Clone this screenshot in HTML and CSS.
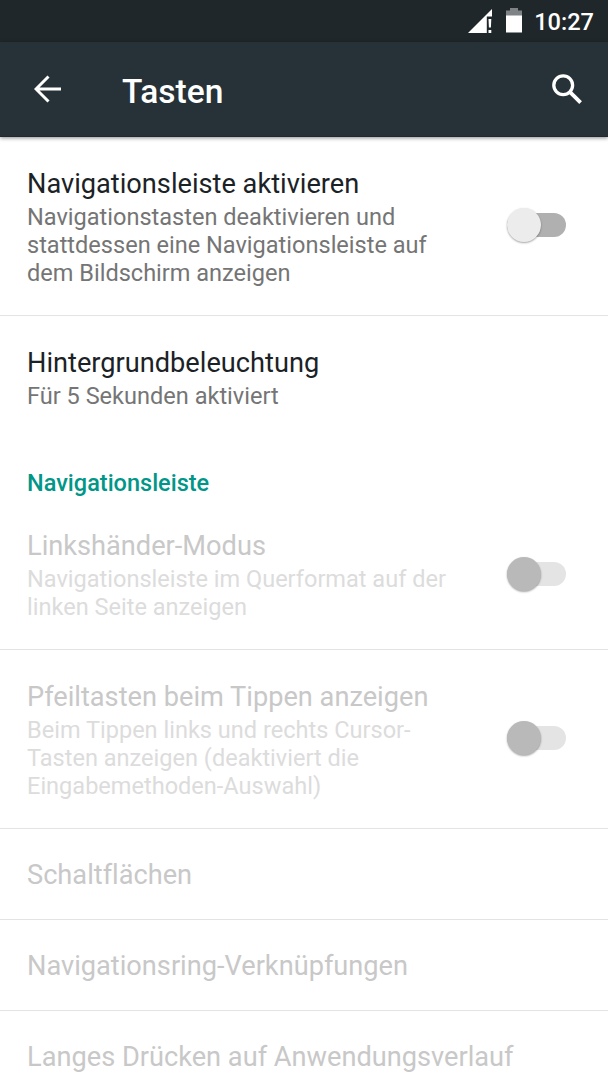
FILE: index.html
```html
<!DOCTYPE html>
<html lang="de">
<head>
<meta charset="utf-8">
<title>Tasten</title>
<link rel="stylesheet" href="styles.css">
</head>
<body>
<div class="statusbar">
  <svg class="signal" width="24" height="24" viewBox="0 0 24 24" fill="#fff"><path d="M0 24L24 0V7.500H18.800V24Z"/><path d="M20.500 10h2.800l-.4 8.500h-2zM20.500 21h2.800v3h-2.800z"/></svg>
  <svg class="battery" width="16" height="25" viewBox="0 0 16 25"><path d="M4 0h8v2.500h4V8H0V2.500h4z" fill="#7f8385"/><path d="M0 7.500h16V24.500H0z" fill="#fff"/></svg>
  <span class="clock">10:27</span>
</div>
<header class="toolbar">
  <svg class="back" width="28" height="28" viewBox="0 0 28 28" fill="none" stroke="#fff" stroke-width="3"><path d="M27 14H3M14.500 1.500L2 14L14.500 26.500"/></svg>
  <h1 class="heading">Tasten</h1>
  <svg class="search" width="30" height="30" viewBox="0 0 30 30" fill="none" stroke="#fff"><circle cx="11.200" cy="11.200" r="9.400" stroke-width="3.300"/><path d="M17.800 17.800L28.600 28.600" stroke-width="3.800"/></svg>
</header>
<main class="list">
  <section class="item nav-enable">
    <div class="copy"><div class="title">Navigationsleiste aktivieren</div><div class="summary">Navigationstasten deaktivieren und<br>stattdessen eine Navigationsleiste auf<br>dem Bildschirm anzeigen</div></div>
    <div class="switch"></div>
  </section>
  <section class="item light">
    <div class="copy"><div class="title">Hintergrundbeleuchtung</div><div class="summary">Für 5 Sekunden aktiviert</div></div>
  </section>
  <h2 class="category">Navigationsleiste</h2>
  <section class="item left-hand disabled">
    <div class="copy"><div class="title">Linkshänder-Modus</div><div class="summary">Navigationsleiste im Querformat auf der<br>linken Seite anzeigen</div></div>
    <div class="switch"></div>
  </section>
  <section class="item arrows disabled">
    <div class="copy"><div class="title">Pfeiltasten beim Tippen anzeigen</div><div class="summary">Beim Tippen links und rechts Cursor-<br>Tasten anzeigen (deaktiviert die<br>Eingabemethoden-Auswahl)</div></div>
    <div class="switch"></div>
  </section>
  <section class="item single disabled"><div class="title">Schaltflächen</div></section>
  <section class="item single disabled"><div class="title">Navigationsring-Verknüpfungen</div></section>
  <section class="item single disabled"><div class="title">Langes Drücken auf Anwendungsverlauf</div></section>
</main>
</body>
</html>
```
FILE: styles.css
```css
* { box-sizing: border-box; }
body { margin: 0; width: 608px; height: 1080px; overflow: hidden; background: #fff; font-family: Roboto, sans-serif; font-variant-ligatures: none; }
.statusbar { height: 42px; background: #20272a; color: #fff; display: flex; justify-content: flex-end; align-items: flex-start; padding: 9px 14px 0 0; }
.battery { margin: -1px 0 0 14px; }
.clock { font-size: 23.6px; line-height: 28px; font-weight: 500; margin: -1px 0 0 12px; }
.toolbar { height: 95px; background: #263238; color: #fff; display: flex; align-items: center; padding: 0 26px 0 34px; border-bottom: 1px solid #1f292e; box-shadow: 0 1px 4px rgba(0,0,0,.45); }
.heading { margin: 6px auto 0 60px; font-size: 33.5px; line-height: 40px; font-weight: 500; }
.search { margin-top: -1px; }
.item { display: flex; align-items: center; justify-content: space-between; padding: 0 42px 0 27px; border-bottom: 1px solid #e3e3e3; }
.title { font-size: 27.2px; line-height: 32px; color: #1b2226; white-space: nowrap; }
.summary { font-size: 23.55px; line-height: 28px; color: #757575; white-space: nowrap; margin-top: 3px; }
.nav-enable { height: 179px; }
.nav-enable .copy, .arrows .copy { padding-top: 3px; }
.nav-enable .switch, .arrows .switch { margin-top: -3px; }
.light { height: 126px; padding-bottom: 1px; border: 0; }
.category { margin: 0; height: 71px; padding: 27px 27px 0; font-size: 23.5px; line-height: 28px; font-weight: 500; color: #009688; }
.left-hand { height: 137px; padding-bottom: 12px; }
.left-hand .switch { margin-top: -3px; }
.arrows { height: 179px; }
.single { height: 91px; padding-top: 2px; }
.disabled .title { color: #c8c8c8; }
.disabled .summary { color: #dcdcdc; }
.switch { position: relative; width: 59px; height: 24px; border-radius: 12px; background: #b0b0b0; }
.switch::before { content: ""; position: absolute; left: 0; top: -5px; width: 34px; height: 34px; border-radius: 50%; background: #ececec; box-shadow: 0 1px 2px rgba(0,0,0,.35); }
.disabled .switch { background: #e4e4e4; }
.disabled .switch::before { background: #b9b9b9; }
```
